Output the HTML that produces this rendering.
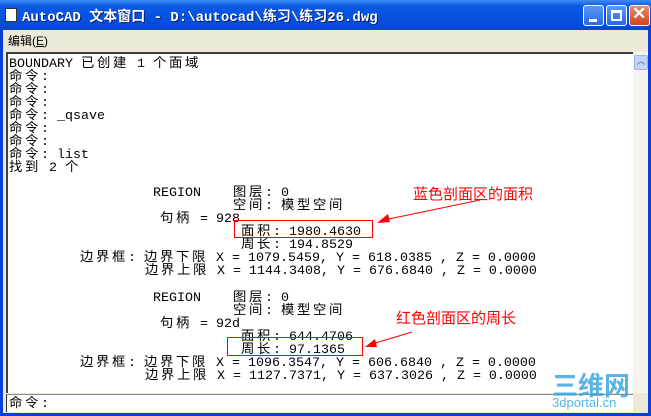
<!DOCTYPE html>
<html><head><meta charset="utf-8"><style>
*{margin:0;padding:0;box-sizing:border-box}
body{width:651px;height:416px;overflow:hidden;background:#0a3fd8;position:relative;font-family:"Liberation Mono","Noto Sans CJK SC",monospace}
.title{position:absolute;left:0;top:0;width:651px;height:30px;background:linear-gradient(#3d8cf5,#0a5ae6 20%,#0550dc 70%,#0a45c8);}
.tt{position:absolute;left:22px;top:6px;color:#fff;font:bold 14px "Liberation Mono","Noto Sans CJK SC",monospace;text-shadow:1px 1px 0 #0a1e70}
.ico{position:absolute;left:5px;top:8px;width:12px;height:14px;background:#fff;border:1px solid #333}
.btn{position:absolute;top:5px;width:21px;height:21px;border:1px solid #fff;border-radius:3px;background:linear-gradient(#5a9af8,#2a66e8)}
.menu{position:absolute;left:3px;top:30px;width:645px;height:18px;background:#ece9d8;font:12px "Liberation Sans","Noto Sans CJK SC",sans-serif;padding:2px 5px}
.area{position:absolute;left:3px;top:48px;width:645px;height:365px;background:#ece9d8}
.txt{position:absolute;left:6px;top:52px;width:627px;height:341px;background:#fff;border-top:2px solid #404040;border-left:2px solid #404040}
.sb{position:absolute;left:633px;top:52px;width:15px;height:341px;background:#f4f3ee}
.up{position:absolute;left:634px;top:55px;width:14px;height:15px;background:#c3d3fd;border:1px solid #9fb4e8;border-radius:2px;color:#4d6185;font-size:9px;text-align:center;line-height:13px}
.cmd{position:absolute;left:6px;top:394px;width:627px;height:18px;background:#fff;border-top:1px solid #888;border-left:1px solid #333}
.l{position:absolute;font-size:13.33px;line-height:13px;white-space:pre;color:#000;margin-top:2px}
.c{letter-spacing:2.67px}
.rb{position:absolute;border:1px solid #f00}
.rt{position:absolute;color:#f00;font:15px "Liberation Sans","Noto Sans CJK SC",sans-serif;white-space:nowrap}
</style></head><body>
<div class="title"><div class="ico"></div><div class="tt">AutoCAD 文本窗口 - D:\autocad\练习\练习26.dwg</div>
<div class="btn" style="left:583px"><div style="position:absolute;left:5px;top:13px;width:8px;height:3px;background:#fff"></div></div>
<div class="btn" style="left:606px"><div style="position:absolute;left:4px;top:4px;width:11px;height:11px;border:2px solid #fff;border-top-width:3px"></div></div>
<div class="btn" style="left:629px;background:linear-gradient(#e88a6a,#d5451e)"><div style="position:absolute;left:2px;top:-2px;color:#fff;font:bold 17px 'Liberation Sans',sans-serif">✕</div></div>
</div>
<div class="menu">编辑(<u>E</u>)</div>
<div class="area"></div>
<div class="txt"></div>
<div class="sb"></div><div class="up">︿</div>
<div class="cmd"></div>
<div class="l" style="left:9px;top:56px">BOUNDARY <span class="c">已创建</span> 1 <span class="c">个面域</span></div>
<div class="l" style="left:9px;top:69px"><span class="c">命令</span>:</div>
<div class="l" style="left:9px;top:82px"><span class="c">命令</span>:</div>
<div class="l" style="left:9px;top:95px"><span class="c">命令</span>:</div>
<div class="l" style="left:9px;top:108px"><span class="c">命令</span>: _qsave</div>
<div class="l" style="left:9px;top:121px"><span class="c">命令</span>:</div>
<div class="l" style="left:9px;top:134px"><span class="c">命令</span>:</div>
<div class="l" style="left:9px;top:147px"><span class="c">命令</span>: list</div>
<div class="l" style="left:9px;top:160px"><span class="c">找到</span> 2 <span class="c">个</span></div>

<div class="l" style="left:153px;top:185px">REGION</div>
<div class="l" style="left:233px;top:185px"><span class="c">图层</span>: 0</div>
<div class="l" style="left:233px;top:198px"><span class="c">空间</span>: <span class="c">模型空间</span></div>
<div class="l" style="left:160px;top:211px"><span class="c">句柄</span> = 928</div>
<div class="l" style="left:241px;top:224px"><span class="c">面积</span>: 1980.4630</div>
<div class="l" style="left:241px;top:237px"><span class="c">周长</span>: 194.8529</div>
<div class="l" style="left:80px;top:250px"><span class="c">边界框</span>: <span class="c">边界下限</span> X = 1079.5459, Y = 618.0385 , Z = 0.0000</div>
<div class="l" style="left:145px;top:263px"><span class="c">边界上限</span> X = 1144.3408, Y = 676.6840 , Z = 0.0000</div>

<div class="l" style="left:153px;top:290px">REGION</div>
<div class="l" style="left:233px;top:290px"><span class="c">图层</span>: 0</div>
<div class="l" style="left:233px;top:303px"><span class="c">空间</span>: <span class="c">模型空间</span></div>
<div class="l" style="left:160px;top:316px"><span class="c">句柄</span> = 92d</div>
<div class="l" style="left:241px;top:329px"><span class="c">面积</span>: 644.4706</div>
<div class="l" style="left:241px;top:342px"><span class="c">周长</span>: 97.1365</div>
<div class="l" style="left:80px;top:355px"><span class="c">边界框</span>: <span class="c">边界下限</span> X = 1096.3547, Y = 606.6840 , Z = 0.0000</div>
<div class="l" style="left:145px;top:368px"><span class="c">边界上限</span> X = 1127.7371, Y = 637.3026 , Z = 0.0000</div>
<div class="l" style="left:9px;top:396px"><span class="c">命令</span>:</div>

<div class="rb" style="left:234px;top:220px;width:139px;height:18px"></div>
<div class="rb" style="left:227px;top:337px;width:136px;height:19px"></div>
<div class="rt" style="left:413px;top:183px">蓝色剖面区的面积</div>
<div class="rt" style="left:396px;top:307px">红色剖面区的周长</div>
<svg style="position:absolute;left:0;top:0" width="651" height="416">
<line x1="480" y1="200" x2="384" y2="220" stroke="#f00" stroke-width="1"/>
<polygon points="377,223 388,214 390,222" fill="#f00"/>
<line x1="412" y1="332" x2="372" y2="344" stroke="#f00" stroke-width="1"/>
<polygon points="365,347 375,339 377,347" fill="#f00"/>
</svg>
<div style="position:absolute;left:552px;top:366px;color:#3aa8e0;font:bold 26px 'Liberation Sans','Noto Sans CJK SC',sans-serif;opacity:.85">三维网</div>
<div style="position:absolute;left:552px;top:395px;color:#3aa8e0;font:13px 'Liberation Sans',sans-serif;opacity:.85">3dportal.cn</div>
</body></html>
